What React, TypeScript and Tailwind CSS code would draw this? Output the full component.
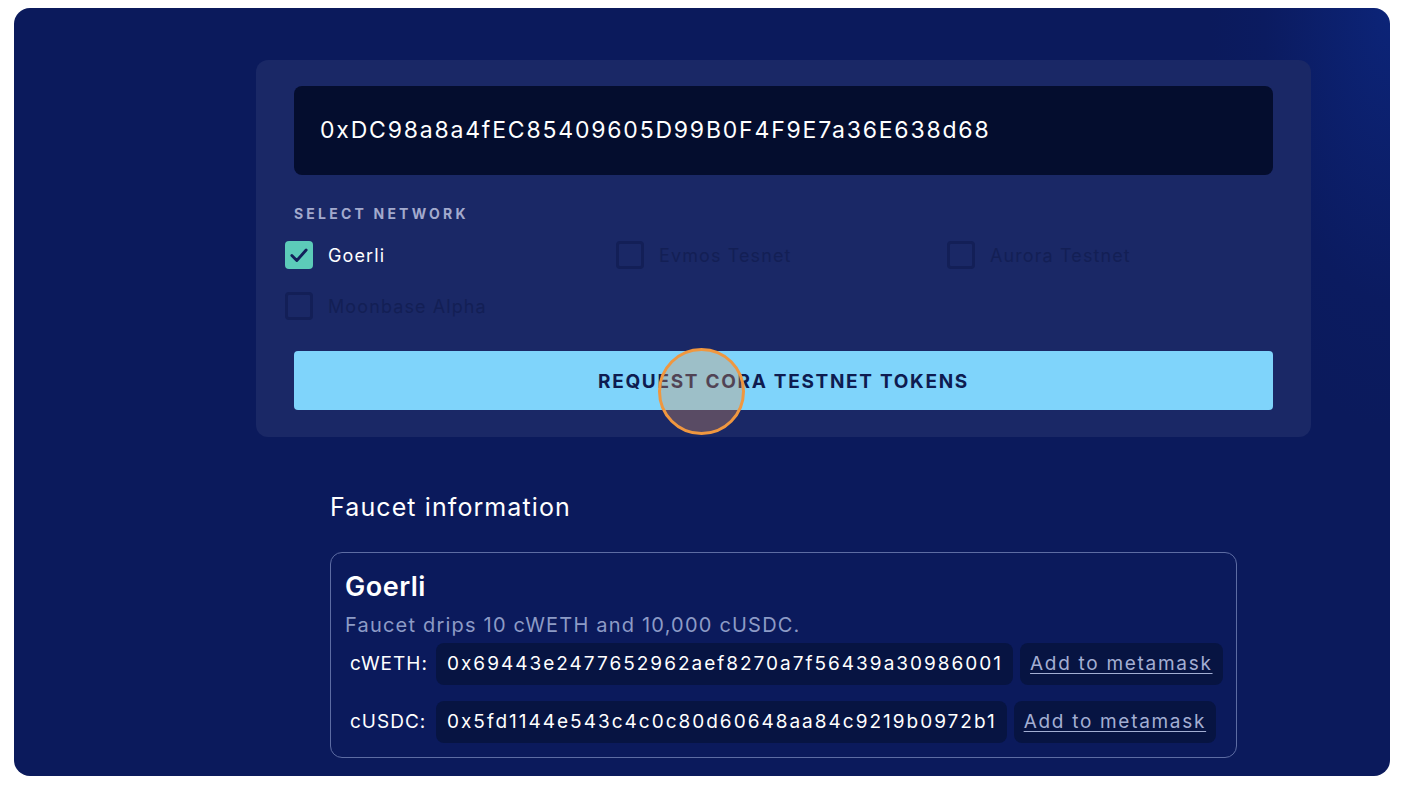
import React from "react";

const font = { fontFamily: "Inter, 'Noto Sans', sans-serif" };

function Check({ checked, label }: { checked?: boolean; label: string }) {
  return (
    <div className="flex items-center h-[28px]">
      {checked ? (
        <div className="w-[28px] h-[28px] rounded-[4px] bg-[#5ccbb9] flex items-center justify-center">
          <svg width="22" height="22" viewBox="0 0 20 20" fill="none">
            <path d="M3.5 10.5 L8 15 L16.5 5.5" stroke="#13205a" strokeWidth="2.6" strokeLinecap="round" strokeLinejoin="round" />
          </svg>
        </div>
      ) : (
        <div className="w-[28px] h-[28px] rounded-[4px] border-[3px] border-[#131f57]" />
      )}
      <span className={`ml-[15px] text-[18px] tracking-[1.1px] ${checked ? "text-white" : "text-[#131f55]"}`}>{label}</span>
    </div>
  );
}

function Row({ label, addr }: { label: string; addr: string }) {
  return (
    <div className="flex items-center h-[42px]">
      <span className="w-[91px] pl-[5px] text-[19px] tracking-[1px] text-white">{label}</span>
      <div className="h-[42px] flex items-center pl-[11px] pr-[10px] rounded-[8px] bg-[#071442] text-[19px] tracking-[2px] text-white">{addr}</div>
      <div className="ml-[7px] h-[42px] flex items-center px-[10px] rounded-[8px] bg-[#071442] text-[19px] tracking-[1.7px] text-[#a3aed3] underline underline-offset-[3px]">
        Add to metamask
      </div>
    </div>
  );
}

export default function App() {
  return (
    <div className="w-[1406px] h-[788px] bg-white pt-[8px] pl-[14px]" style={font}>
      <div className="relative w-[1376px] h-[768px] rounded-[16px] overflow-hidden bg-[radial-gradient(ellipse_180px_420px_at_100%_0%,#0c2478_0%,#0b1b60_70%,#0b1a5c_100%)] bg-[#0b1a5c] pt-[52px]">
        <div className="ml-[242px] w-[1055px] rounded-[12px] bg-[#1a2866] px-[38px] pt-[26px] pb-[27px]">
          <div className="h-[89px] rounded-[8px] bg-[#040d2e] flex items-center pl-[26px] text-[23px] text-white tracking-[1.8px]">
            0xDC98a8a4fEC85409605D99B0F4F9E7a36E638d68
          </div>
          <div className="mt-[31px] text-[14px] font-bold tracking-[3.2px] text-[#a3aacd] leading-[16px]">SELECT NETWORK</div>
          <div className="ml-[-9px] mt-[19px] grid grid-cols-[331px_331px_331px] gap-y-[23px]">
            <Check checked label="Goerli" />
            <Check label="Evmos Tesnet" />
            <Check label="Aurora Testnet" />
            <Check label="Moonbase Alpha" />
          </div>
          <div className="mt-[31px] h-[59px] pt-[3px] rounded-[4px] bg-[#7fd4fb] flex items-center justify-center text-[19px] font-bold text-[#0e1c50] tracking-[1.7px]">
            REQUEST CORA TESTNET TOKENS
          </div>
        </div>
        <div className="ml-[316px] w-[907px]">
          <div className="mt-[55px] text-[25px] tracking-[1.1px] text-white leading-[30px]">Faucet information</div>
          <div className="mt-[30px] rounded-[12px] border border-[#5d6ca3] pl-[14px] pt-[17px] pb-[14px]">
            <div className="text-[27px] font-semibold tracking-[0.5px] text-white leading-[34px]">Goerli</div>
            <div className="mt-[7px] text-[20px] tracking-[1.2px] text-[#8d9bc6] leading-[28px]">Faucet drips 10 cWETH and 10,000 cUSDC.</div>
            <div className="mt-[4px] flex flex-col gap-[16px]">
              <Row label="cWETH:" addr="0x69443e2477652962aef8270a7f56439a30986001" />
              <Row label="cUSDC:" addr="0x5fd1144e543c4c0c80d60648aa84c9219b0972b1" />
            </div>
          </div>
        </div>
        <div className="absolute left-[644px] top-[340px] w-[87px] h-[87px] rounded-full border-[3px] border-[#f0973f] bg-[rgba(218,149,98,0.33)]" />
      </div>
    </div>
  );
}
